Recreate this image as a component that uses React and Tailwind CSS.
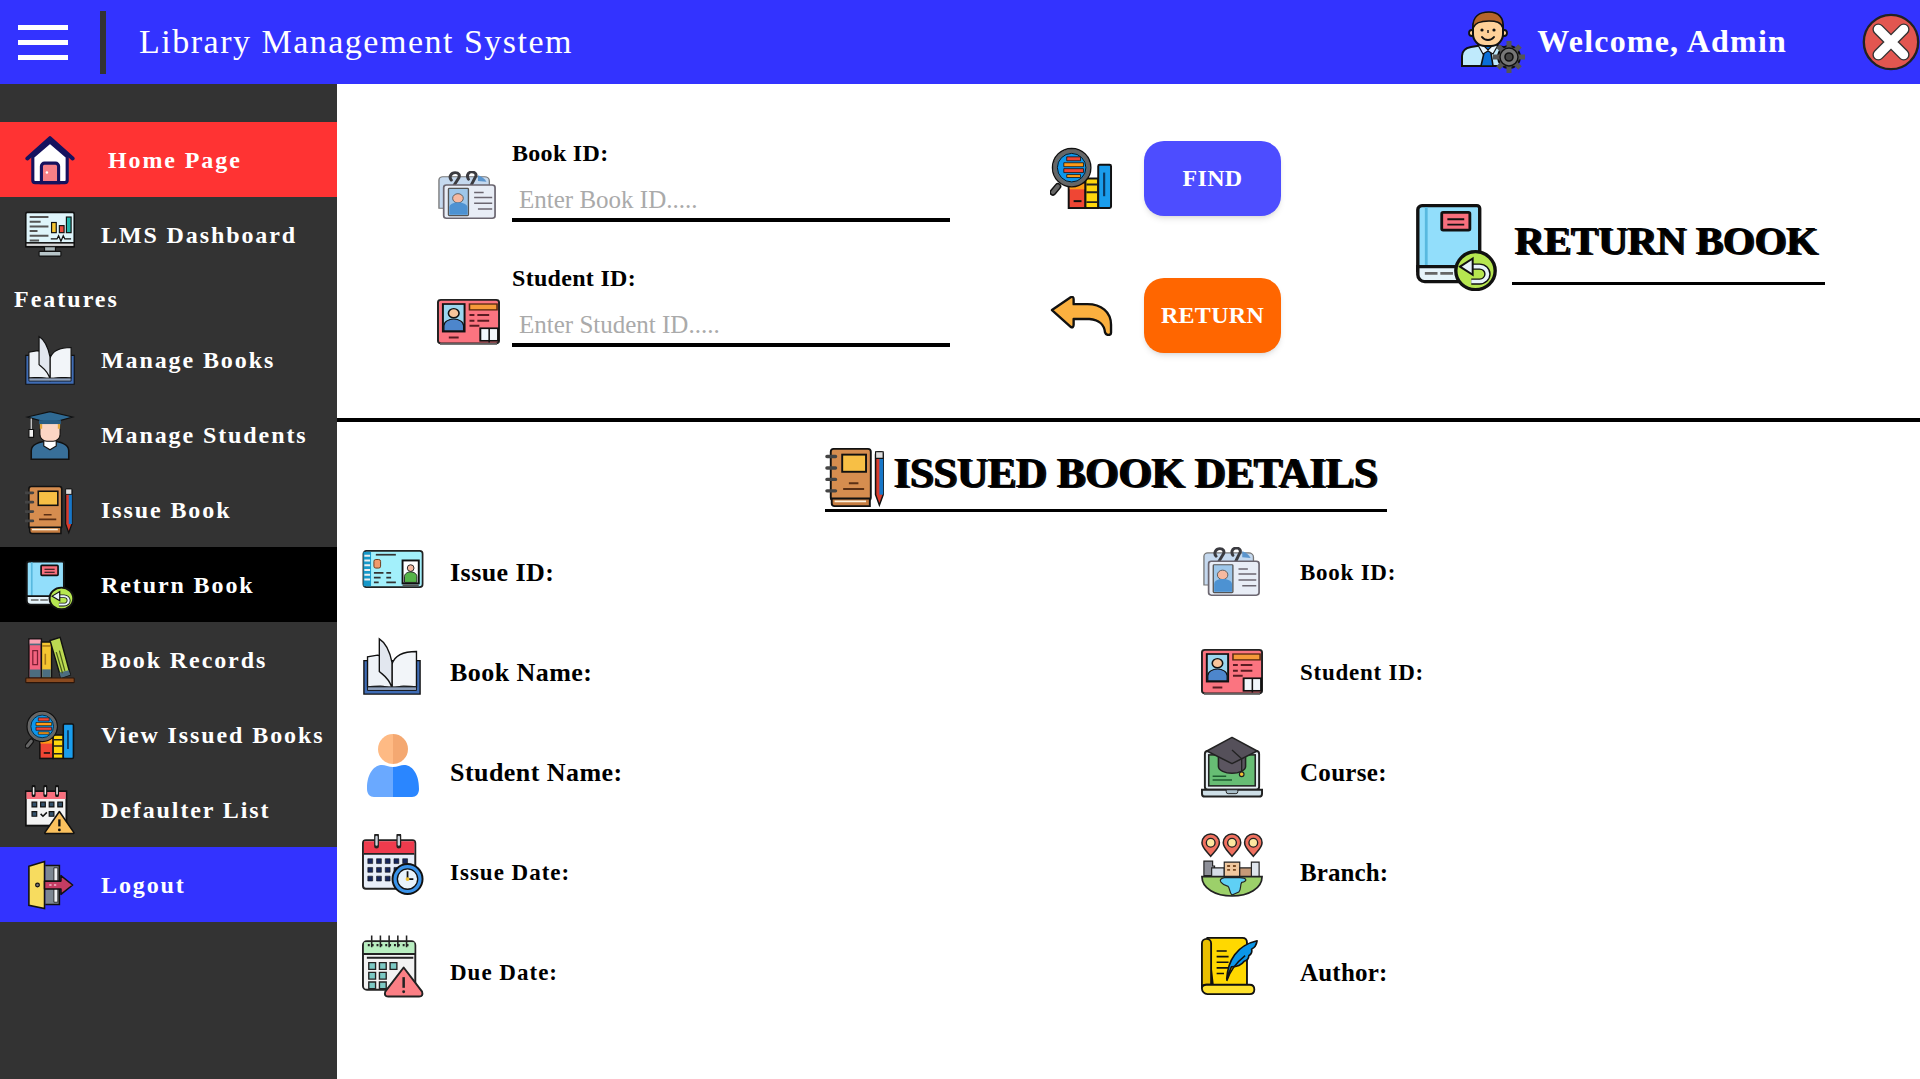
const INK = "#111";

const HomeIcon = ({ className }) => (
  <svg viewBox="0 0 64 64" className={className}>
    <path d="M10 28v30a3 3 0 0 0 3 3h38a3 3 0 0 0 3-3V28L32 9Z" fill="#fff" stroke="#16125e" strokeWidth="4" strokeLinejoin="round" />
    <path d="M3 30 32 4l29 26" fill="none" stroke="#16125e" strokeWidth="5" strokeLinecap="round" strokeLinejoin="round" />
    <path d="M21 61V40a4 4 0 0 1 4-4h14a4 4 0 0 1 4 4v21Z" fill="#f77f86" stroke="#16125e" strokeWidth="4" />
    <circle cx="28" cy="48" r="1.6" fill="#fff" />
  </svg>
);

const DashboardIcon = ({ className }) => (
  <svg viewBox="0 0 64 64" className={className}>
    <rect x="1" y="3" width="62" height="44" rx="2" fill="#dff5fb" stroke={INK} strokeWidth="2" />
    <rect x="1" y="42" width="62" height="5" fill="#d6d6d6" stroke={INK} strokeWidth="2" />
    <path d="M6 9h24M6 15h14M6 21h24M6 27h10M6 33h24M6 39h12" stroke="#555" strokeWidth="2.6" />
    <rect x="34" y="16" width="6" height="13" fill="#f5c531" stroke={INK} strokeWidth="1.5" />
    <rect x="44" y="20" width="6" height="9" fill="#ee4b3c" stroke={INK} strokeWidth="1.5" />
    <rect x="53" y="9" width="6" height="20" fill="#24b5aa" stroke={INK} strokeWidth="1.5" />
    <path d="M33 37h8l2-4 3 7 3-7 2 4h8" fill="none" stroke={INK} strokeWidth="1.6" />
    <path d="M25 47h14v6H25Z" fill="#a8b5b8" stroke={INK} strokeWidth="1.5" />
    <rect x="18" y="53" width="28" height="6" rx="1" fill="#b7c5c9" stroke={INK} strokeWidth="1.5" />
  </svg>
);

const OpenBookIcon = ({ className }) => (
  <svg viewBox="0 0 64 64" className={className}>
    <path d="M1 26h62v37H1Z" fill="#3f6cb5" stroke={INK} strokeWidth="1.5" />
    <path d="M32 58C24 52 14 55 5 55V22l11-2c8 1 14 8 16 14Z" fill="#eef2f7" stroke={INK} strokeWidth="1.5" />
    <path d="M32 58c8-6 18-3 27-3V16c-13 0-24 4-27 14Z" fill="#f2f5f9" stroke={INK} strokeWidth="1.5" />
    <path d="M32 56C28 44 22 42 18 38V2c8 5 12 16 14 26Z" fill="#e2e7ef" stroke={INK} strokeWidth="1.5" />
    <path d="M5 55h54v4H5Z" fill="#8ea0bc" stroke={INK} strokeWidth="1" />
  </svg>
);

const GraduateIcon = ({ className }) => (
  <svg viewBox="0 0 64 64" className={className}>
    <path d="M8 63V52c0-8 10-12 24-12s24 4 24 12v11Z" fill="#386f99" stroke={INK} strokeWidth="2" />
    <path d="M24 38h16v8l-8 5-8-5Z" fill="#fff" stroke={INK} strokeWidth="1.5" />
    <rect x="19" y="14" width="26" height="26" rx="9" fill="#fcd5c4" stroke={INK} strokeWidth="1.5" />
    <path d="M19 24V14h3v10Zm23 0V14h3v10Z" fill="#e4a73a" />
    <path d="M3 9 32 2l29 7-29 8Z" fill="#2f6a94" stroke={INK} strokeWidth="1.5" />
    <path d="M18 13h28v5H18Z" fill="#2a5d83" />
    <path d="M8 11v14" stroke="#ddd" strokeWidth="1.5" />
    <path d="M5 25h6v10H5Z" fill="#f1f1f1" stroke={INK} strokeWidth="1.5" />
  </svg>
);

const NotebookIcon = ({ className }) => (
  <svg viewBox="0 0 64 64" className={className}>
    <rect x="5" y="2" width="42" height="54" rx="3" fill="#d68d4f" stroke={INK} strokeWidth="2" />
    <path d="M6 54h40v8H9a3 3 0 0 1-3-3Z" fill="#c57c40" stroke={INK} strokeWidth="2" />
    <path d="M9 56h33v2H9Z" fill="#fbf0dc" />
    <rect x="17" y="8" width="25" height="18" fill="#f7bf45" stroke={INK} strokeWidth="2" />
    <path d="M24 38h10M18 44h22" stroke="#5a2f14" strokeWidth="2" />
    <path d="M1 10h9M1 22h9M1 34h9M1 46h9" stroke="#444" strokeWidth="3.6" strokeLinecap="round" />
    <path d="M52 8a3 3 0 0 1 3-3h2a3 3 0 0 1 3 3v42l-4 11-4-11Z" fill="#d83b2d" stroke={INK} strokeWidth="1.6" />
    <path d="M56 11h4v39h-4Z" fill="#1677c9" />
    <path d="M52 5h8v7h-8Z" fill="#ddd" stroke={INK} strokeWidth="1.2" />
  </svg>
);

const ReturnBookIcon = ({ className }) => (
  <svg viewBox="4 0 59 65" preserveAspectRatio="none" className={className}>
    <path d="M6 50V5a3 3 0 0 1 3-3h39a2 2 0 0 1 2 2v46Z" fill="#92defb" stroke={INK} strokeWidth="2.4" />
    <path d="M12 3v47" stroke="#58b9df" strokeWidth="2" />
    <rect x="23" y="7" width="20" height="13" rx="1" fill="#f86f7d" stroke={INK} strokeWidth="2" />
    <path d="M27 12h12M27 16h12" stroke={INK} strokeWidth="1.3" />
    <path d="M6 47v6a5 5 0 0 0 5 5h33V47Z" fill="#e6f4fb" stroke={INK} strokeWidth="2.4" />
    <path d="M11 52h24" stroke="#666" strokeWidth="2" strokeDasharray="9 2" />
    <circle cx="47" cy="50" r="14" fill="#b6e650" stroke={INK} strokeWidth="2.4" />
    <path d="M44 47h6a5.5 5.5 0 0 1 0 11h-6" fill="none" stroke={INK} strokeWidth="4.6" />
    <path d="M44 47h6a5.5 5.5 0 0 1 0 11h-6" fill="none" stroke="#e8f4fa" strokeWidth="2.6" />
    <path d="m36 47 9-6v12Z" fill="#e8f4fa" stroke={INK} strokeWidth="1.4" />
  </svg>
);

const ShelfIcon = ({ className }) => (
  <svg viewBox="0 0 64 64" className={className}>
    <rect x="5" y="5" width="16" height="50" fill="#f2637f" stroke={INK} strokeWidth="1.8" />
    <path d="M6 6h14v7H6Zm0 38h14v10H6Z" fill="#4c6d80" />
    <path d="M6 6h14v5H6Z" fill="#f9a3b2" />
    <path d="M10 20h6v18h-6Z" fill="none" stroke="#7b1f33" strokeWidth="1.6" />
    <rect x="21" y="9" width="13" height="46" fill="#f5c531" stroke={INK} strokeWidth="1.8" />
    <path d="M22 44h11v10H22Z" fill="#4c6d80" />
    <path d="M22 14h11" stroke="#a9791a" strokeWidth="2" />
    <path d="M26 24v14" stroke="#a9791a" strokeWidth="2" />
    <path d="m32 7 13-4 13 48-12 4Z" fill="#bcd951" stroke={INK} strokeWidth="1.8" />
    <path d="m44 48 12-3 2 6-12 4Z" fill="#4c6d80" />
    <path d="m40 22 8 27M44 20l7 26" stroke="#4b5e18" strokeWidth="1.6" />
    <rect x="1" y="55" width="62" height="6" rx="1" fill="#8a4a1f" stroke="#2c160a" strokeWidth="1.4" />
  </svg>
);

const SearchBooksIcon = ({ className }) => (
  <svg viewBox="0 0 64 64" className={className}>
    <rect x="19" y="36" width="17" height="26" fill="#ef4634" stroke={INK} strokeWidth="2" />
    <path d="M20 37h15v6H20Z" fill="#ff9b16" />
    <path d="M24 55h8" stroke={INK} strokeWidth="2" />
    <rect x="36" y="32" width="13" height="30" fill="#fdd60c" stroke={INK} strokeWidth="2" />
    <path d="M37 38h11M37 46h11M37 56h11" stroke="#222" strokeWidth="2" />
    <rect x="49" y="18" width="13" height="44" rx="1.5" fill="#1a9dec" stroke={INK} strokeWidth="2" />
    <path d="M55 26v24" stroke="#0b3a63" strokeWidth="2.2" />
    <path d="m8 40-5 6" stroke={INK} strokeWidth="7" strokeLinecap="round" />
    <path d="m8 40-5 6" stroke="#666" strokeWidth="4" strokeLinecap="round" />
    <circle cx="22" cy="21" r="17" fill="#0d96ec" stroke="#666" strokeWidth="4" />
    <circle cx="22" cy="21" r="19.500" fill="none" stroke={INK} strokeWidth="1.400" />
    <circle cx="22" cy="21" r="14.500" fill="none" stroke={INK} strokeWidth="1" />
    <path d="M17 10h14v4H17Z" fill="#ef4634" stroke={INK} strokeWidth=".8" />
    <path d="M14 16h20v4H14Z" fill="#ff9b16" stroke={INK} strokeWidth=".8" />
    <path d="M14 22h20v4H14Z" fill="#ef4634" stroke={INK} strokeWidth=".8" />
    <path d="M17 28h14v3H17Z" fill="#ff9b16" stroke={INK} strokeWidth=".8" />
  </svg>
);

const CalendarWarnIcon = ({ className }) => (
  <svg viewBox="0 0 64 64" className={className}>
    <rect x="1" y="8" width="52" height="44" fill="#f3f3f3" stroke="#111" strokeWidth="2.400" />
    <path d="M2 9h50v9H2Z" fill="#f86f7d" />
    <path d="M11 2v11M26 2v11M41 2v11" stroke="#111" strokeWidth="5" strokeLinecap="round" />
    <path d="M11 3.500v8M26 3.500v8M41 3.500v8" stroke="#eee" strokeWidth="2" strokeLinecap="round" />
    <path d="M9 22h6v6H9Zm11 0h6v6h-6Zm11 0h6v6h-6Zm11 0h6v6h-6ZM9 34h6v6H9Zm22 0h6v6h-6Z" fill="#33506a" stroke="#111" strokeWidth="1.500" />
    <path d="m20 37 3 3 5-5" fill="none" stroke="#111" strokeWidth="2" />
    <path d="M44 34 62 60a1 1 0 0 1-1 2H27a1 1 0 0 1-1-2Z" fill="#fbc15e" stroke="#111" strokeWidth="2" strokeLinejoin="round" />
    <path d="M44 44v9" stroke="#111" strokeWidth="3" />
    <circle cx="44" cy="57.500" r="1.800" fill="#111" />
  </svg>
);

const LogoutIcon = ({ className }) => (
  <svg viewBox="0 0 64 64" className={className}>
    <path d="M26 7h18v50H26" fill="#7c8792" stroke="#111" strokeWidth="2" />
    <path d="M37 10h5v44h-5Z" fill="#eef1f4" stroke="#111" strokeWidth="1" />
    <path d="M5 8 25 2v60L5 58Z" fill="#f7dc5f" stroke="#111" strokeWidth="2" />
    <circle cx="16" cy="32" r="2.400" fill="#777" stroke="#111" strokeWidth="1.500" />
    <path d="M25 27h21v-7l15 12-15 12v-7H25Z" fill="#c43c63" stroke="#111" strokeWidth="2" strokeLinejoin="round" />
    <path d="M31 32h3M37 32h3" stroke="#fff" strokeWidth="1.500" />
  </svg>
);

const AdminIcon = ({ className }) => (
  <svg viewBox="0 0 64 64" className={className}>
    <path d="M1 56V46c0-5 4-8 9-9l12-2h8l12 2c3 1 5 2 6 4v15Z" fill="#bfeafc" stroke={INK} strokeWidth="2" />
    <path d="M19 36h15l-4 7 2 13h-12l3-13Z" fill="#0a6fd8" stroke={INK} strokeWidth="1.600" />
    <path d="M17 35h5l5 5 5-5h5l-5 9-5-3-5 3Z" fill="#e9f7ff" stroke={INK} strokeWidth="1.200" />
    <circle cx="11" cy="23" r="3" fill="#ffd199" stroke={INK} strokeWidth="1.800" />
    <circle cx="43" cy="23" r="3" fill="#ffd199" stroke={INK} strokeWidth="1.800" />
    <rect x="12" y="6" width="30" height="30" rx="12" fill="#ffd199" stroke={INK} strokeWidth="2" />
    <path d="M12 18C11 6 19 2 28 2s15 5 14 16c-2-6-7-7-14-7S14 12 12 18Z" fill="#b5662c" stroke={INK} strokeWidth="1.600" />
    <circle cx="21" cy="20" r="1.600" fill={INK} />
    <circle cx="33" cy="20" r="1.600" fill={INK} />
    <path d="M21 27c3 4 9 4 12 0" fill="none" stroke={INK} strokeWidth="2" strokeLinecap="round" />
    <path d="M27 20v3" stroke={INK} strokeWidth="1.400" />
    <circle cx="48" cy="47" r="11" fill="#6b6b6b" stroke={INK} strokeWidth="2" />
    <path d="M48 31v32M32 47h32M37 36l22 22M59 36 37 58" stroke="#555" strokeWidth="5" />
    <circle cx="48" cy="47" r="9" fill="#777" stroke={INK} strokeWidth="1.400" />
    <circle cx="48" cy="47" r="4" fill="#444" stroke={INK} strokeWidth="1.600" />
  </svg>
);

const CloseIcon = ({ className }) => (
  <svg viewBox="0 0 64 64" className={className}>
    <circle cx="32" cy="32" r="30" fill="#e25650" stroke="#222" strokeWidth="2.600" />
    <path d="m18 18 28 28M46 18 18 46" stroke="#333" strokeWidth="13" strokeLinecap="round" />
    <path d="m18 18 28 28M46 18 18 46" stroke="#fff" strokeWidth="10" strokeLinecap="round" />
  </svg>
);

const IdCardsIcon = ({ className }) => (
  <svg viewBox="2 3 61 58" preserveAspectRatio="none" className={className}>
    <path d="M3 48V14a4 4 0 0 1 4-4h44a5 5 0 0 1 5 5v6H12v27Z" fill="#c5d9ef" stroke="#777" strokeWidth="1.400" />
    <path d="M44 8c4 1 7 4 9 8l-9-1Z" fill="#5b95cd" />
    <path d="M16 14c-3-4 0-9 4-9s5 3 4 6l-5 9M34 13c-2-4-1-8 3-9 5 0 6 4 4 7l-4 9" fill="none" stroke="#3b3b40" strokeWidth="3.200" strokeLinecap="round" />
    <rect x="8" y="20" width="54" height="40" rx="3" fill="#e8edf6" stroke="#6b6670" strokeWidth="1.800" />
    <rect x="13" y="24" width="21" height="33" rx="1" fill="#9ec7ea" stroke="#555" strokeWidth="1.400" />
    <circle cx="23" cy="36" r="5.600" fill="#f6b9a0" stroke="#555" strokeWidth="1" />
    <path d="M14 56v-9c0-4 4-6 9-6s10 2 10 6v9Z" fill="#4d92d2" />
    <path d="M40 29h10M40 35h19M40 42h19M44 49h15" stroke="#6b6670" strokeWidth="1.800" />
  </svg>
);

const StudentCardIcon = ({ className }) => (
  <svg viewBox="0 4 64 55" preserveAspectRatio="none" className={className}>
    <rect x="1" y="5" width="62" height="52" rx="3" fill="#fb7480" stroke="#222" strokeWidth="2" />
    <path d="M3 58h58" stroke="#777" strokeWidth="2" />
    <rect x="6" y="10" width="22" height="33" fill="#9bd6ef" stroke="#111" strokeWidth="2" />
    <circle cx="17" cy="21" r="5.400" fill="#f9c59a" stroke="#111" strokeWidth="1.600" />
    <path d="M7 42v-6c0-5 5-8 10-8s10 3 10 8v6Z" fill="#4d86cc" stroke="#111" strokeWidth="1.200" />
    <rect x="33" y="10" width="28" height="7" fill="#f69a3a" stroke="#5a2a10" strokeWidth="1.600" />
    <path d="M33 23h5M41 23h12M33 30h5M41 30h12M33 36h10M12 50h10" stroke="#5a1c22" strokeWidth="2.400" />
    <rect x="44" y="39" width="18" height="15" fill="#f2f7fb" stroke="#111" strokeWidth="2" />
    <path d="M53 39v17" stroke="#111" strokeWidth="1.600" />
  </svg>
);

const UndoIcon = ({ className }) => (
  <svg viewBox="0 0 64 40" className={className}>
    <path d="M2 14 21 1c2-1 3 0 3 2v5h14c14 0 24 8 24 21v8c0 3-5 3-6 0-1-8-5-13-16-14H24v6c0 2-1 3-3 2Z" fill="#fbb03f" stroke={INK} strokeWidth="2.400" strokeLinejoin="round" />
  </svg>
);

const IssueCardIcon = ({ className }) => (
  <svg viewBox="0 0 64 44" className={className}>
    <rect x="1" y="2" width="62" height="38" rx="3" fill="#a3f0fb" stroke="#222" strokeWidth="1.800" />
    <path d="M1 3h8v36H1Z" fill="#1798c9" />
    <path d="M2 7h6M2 12h6M2 17h6M2 22h6M2 27h6M2 32h6" stroke="#eee" strokeWidth="2" />
    <path d="M14 6h21" stroke="#333" strokeWidth="1.800" />
    <rect x="12" y="11" width="7" height="9" rx="2" fill="#f09a6c" stroke="#6a3a1c" strokeWidth="1" />
    <path d="M12 25h10M12 30h7M12 35h5M25 25h5M25 30h5M25 35h10" stroke="#333" strokeWidth="1.800" />
    <rect x="42" y="12" width="17" height="24" fill="#fff" stroke="#111" strokeWidth="2" />
    <circle cx="50.500" cy="20" r="3.500" fill="#f6b9a0" stroke="#222" strokeWidth="1" />
    <path d="M44 35v-6c0-3 3-5 6.500-5s6.500 2 6.500 5v6Z" fill="#56b548" stroke="#222" strokeWidth="1" />
    <path d="M42 38h17" stroke="#555" strokeWidth="2" />
  </svg>
);

const PersonIcon = ({ className }) => (
  <svg viewBox="0 0 52 64" className={className}>
    <path d="M26 1a15 15 0 0 0 0 30Z" fill="#feba84" />
    <path d="M26 1a15 15 0 0 1 0 30Z" fill="#f4a871" />
    <path d="M26 34c-4 0-8-2-11-2-7 0-15 7-15 24 0 5 3 8 7 8h19Z" fill="#6aa9ff" />
    <path d="M26 34c4 0 8-2 11-2 7 0 15 7 15 24 0 5-3 8-7 8H26Z" fill="#2a86ff" />
  </svg>
);

const CalendarClockIcon = ({ className }) => (
  <svg viewBox="0 0 64 64" className={className}>
    <rect x="1" y="6" width="54" height="50" rx="3" fill="#e8eef9" stroke="#222" strokeWidth="2" />
    <path d="M2 7h52v13H2Z" fill="#ef3b4d" />
    <path d="M2 20h52" stroke="#222" strokeWidth="2" />
    <path d="M15 1v11M38 1v11" stroke="#222" strokeWidth="5" strokeLinecap="round" />
    <path d="M15 2.500v8M38 2.500v8" stroke="#cfd6de" strokeWidth="2.400" strokeLinecap="round" />
    <path d="M6 25h5v5H6Zm9 0h5v5h-5Zm9 0h5v5h-5Zm9 0h5v5h-5Zm9 0h5v5h-5ZM6 34h5v5H6Zm9 0h5v5h-5Zm9 0h5v5h-5Zm9 0h5v5h-5ZM6 43h5v5H6Zm9 0h5v5h-5Zm9 0h5v5h-5Z" fill="#16265c" stroke="#111" strokeWidth=".6" />
    <circle cx="47" cy="46" r="15.500" fill="#3a93ea" stroke="#111" strokeWidth="2" />
    <circle cx="47" cy="46" r="10.500" fill="#e8f3fb" stroke="#111" strokeWidth="1.400" />
    <path d="M47 38v8h6" fill="none" stroke="#111" strokeWidth="1.800" />
    <circle cx="47" cy="46" r="2" fill="#f1c232" />
  </svg>
);

const CalendarDueIcon = ({ className }) => (
  <svg viewBox="0 0 64 64" className={className}>
    <rect x="1" y="6" width="54" height="50" rx="4" fill="#f3f3f3" stroke="#222" strokeWidth="2" />
    <path d="M2 7h52v11H2Z" fill="#b8eec0" />
    <path d="M1 19h54M5 23h48" stroke="#222" strokeWidth="2" />
    <path d="M10 0v12M19 0v12M28 0v12M37 0v12M46 0v12" stroke="#222" strokeWidth="1.600" />
    <path d="M6 10h8M15 10h8M24 10h8M33 10h8M42 10h8" stroke="#222" strokeWidth="2.400" strokeDasharray="2 2" />
    <path d="M7 28h7v7H7Zm11 0h7v7h-7Zm11 0h7v7h-7ZM7 38h7v7H7Zm11 0h7v7h-7ZM7 48h7v7H7Zm11 0h7v7h-7Z" fill="#7cc9c4" stroke="#222" strokeWidth="1.400" />
    <path d="M43 33 62 58c1 3 0 5-3 5H27c-3 0-4-2-3-5Z" fill="#fb7f85" stroke="#222" strokeWidth="2" strokeLinejoin="round" />
    <path d="M43 43v11" stroke="#222" strokeWidth="2.600" />
    <circle cx="43" cy="58" r="1.500" fill="#222" />
  </svg>
);

const LaptopIcon = ({ className }) => (
  <svg viewBox="0 0 64 64" className={className}>
    <rect x="4" y="16" width="56" height="40" rx="3" fill="#e6eef3" stroke="#222" strokeWidth="2" />
    <rect x="8" y="20" width="48" height="32" fill="#67bd74" stroke="#222" strokeWidth="1.600" />
    <path d="M12 42h14M12 46h20" stroke="#1f5c30" strokeWidth="1.600" />
    <path d="M1 56h62v4a3 3 0 0 1-3 3H4a3 3 0 0 1-3-3Z" fill="#cfe0e8" stroke="#222" strokeWidth="2" />
    <path d="M26 56h12v2a2 2 0 0 1-2 2h-8a2 2 0 0 1-2-2Z" fill="#aac0cb" stroke="#222" strokeWidth="1" />
    <path d="M18 20v12c0 4 7 7 14 7s14-3 14-7V20Z" fill="#5b5560" stroke="#222" strokeWidth="1.600" />
    <path d="M32 2 58 16 32 29 6 16Z" fill="#55505a" stroke="#222" strokeWidth="1.600" strokeLinejoin="round" />
    <path d="M32 15 42 24v14" fill="none" stroke="#222" strokeWidth="1.400" />
    <circle cx="42" cy="40" r="2.400" fill="#f1c232" stroke="#222" strokeWidth="1.200" />
  </svg>
);

const Pin = ({ x }) => (
  <g>
    <path d={`M${x} 23c-5-6-9-9-9-14a9 9 0 0 1 18 0c0 5-4 8-9 14Z`} fill="#f0705f" stroke="#222" strokeWidth="1.600" />
    <circle cx={x} cy="9" r="4.500" fill="#fde7a0" stroke="#222" strokeWidth="1.400" />
  </g>
);

const BranchIcon = ({ className }) => (
  <svg viewBox="0 0 64 64" className={className}>
    <Pin x={10} />
    <Pin x={32} />
    <Pin x={54} />
    <path d="M3 43V28h9v5h2v10Z" fill="#8d8f98" stroke="#222" strokeWidth="1.200" />
    <path d="M11 44V35h13v9Z" fill="#d6dde6" stroke="#222" strokeWidth="1.200" />
    <path d="M24 44V29h16v15Z" fill="#f0c89f" stroke="#222" strokeWidth="1.200" />
    <path d="M27 33h3M33 33h3M27 37h3M33 37h3" stroke="#7a4a22" strokeWidth="2" />
    <path d="M40 44v-9h13v9Z" fill="#c69a78" stroke="#222" strokeWidth="1.200" />
    <path d="M52 44V29h8v15Z" fill="#dfe5ec" stroke="#222" strokeWidth="1.200" />
    <path d="M1 44h62c0 12-14 20-31 20S1 56 1 44Z" fill="#9cd06a" stroke="#222" strokeWidth="1.800" />
    <path d="M24 45h16c8 0 8 4 2 5-2 3 0 6-3 10l-7 3c-3-3-2-7-4-9-5-1-13-7-4-9Z" fill="#5fd0f5" stroke="#222" strokeWidth="1.200" />
  </svg>
);

const ScrollIcon = ({ className }) => (
  <svg viewBox="1 1 62 62" preserveAspectRatio="none" className={className}>
    <path d="M8 2h38c3 0 5 2 5 5v46H14Z" fill="#ffd800" stroke="#111" strokeWidth="2" />
    <path d="M2 8a5 5 0 0 1 10 0v44H7c-3 0-5 1-5 4Z" fill="#e9bf00" stroke="#111" strokeWidth="2" />
    <path d="M10 52h44c4 0 5 3 5 5s-1 5-5 5H8a6 6 0 0 1-6-6c0-3 2-4 5-4h3Z" fill="#ffe22e" stroke="#111" strokeWidth="2" />
    <path d="M18 16h11M18 22h13M18 28h13M18 34h13M18 40h8" stroke="#111" strokeWidth="1.800" />
    <path d="M29 46C30 26 40 10 62 5c-1 6-3 7-6 9 1 3 0 5-3 7 0 3-2 5-5 6-3 4-9 6-14 6Z" fill="#0b96e8" stroke="#111" strokeWidth="1.800" strokeLinejoin="round" />
    <path d="M29 48c4-12 11-20 20-27" fill="none" stroke="#111" strokeWidth="1.600" />
  </svg>
);

const menuItems = [
  { label: "Home Page", Icon: HomeIcon, rowClass: "bg-[#ff3333]", textClass: "ml-[33px]" },
  { label: "LMS Dashboard", Icon: DashboardIcon },
  { heading: "Features" },
  { label: "Manage Books", Icon: OpenBookIcon },
  { label: "Manage Students", Icon: GraduateIcon },
  { label: "Issue Book", Icon: NotebookIcon },
  { label: "Return Book", Icon: ReturnBookIcon, rowClass: "bg-black" },
  { label: "Book Records", Icon: ShelfIcon },
  { label: "View Issued Books", Icon: SearchBooksIcon },
  { label: "Defaulter List", Icon: CalendarWarnIcon },
  { label: "Logout", Icon: LogoutIcon, rowClass: "bg-[#3333ff]" },
];

const bigText = "mb-[2px] ml-[26px] text-[26px] tracking-[0.45px]";
const smallText = "ml-[26px] text-[23px] tracking-[1px]";

const leftDetails = [
  { label: "Issue ID:", Icon: IssueCardIcon, iconClass: "w-[62px] h-[42px] mb-[6px]", textClass: bigText },
  { label: "Book Name:", Icon: OpenBookIcon, iconClass: "-ml-[1px] w-[62px] h-[58px] mb-[14px] mr-[1px]", textClass: bigText },
  { label: "Student Name:", Icon: PersonIcon, iconClass: "w-[62px] h-[64px] mb-[16px]", textClass: bigText },
  { label: "Issue Date:", Icon: CalendarClockIcon, iconClass: "w-[62px] h-[63px] mb-[16px]", textClass: smallText },
  { label: "Due Date:", Icon: CalendarDueIcon, iconClass: "w-[62px] h-[63px] mb-[14px]", textClass: smallText },
];

const rightDetails = [
  { label: "Book ID:", Icon: IdCardsIcon, iconClass: "ml-[2px] mr-[3px] w-[57px] h-[49px] mb-[4px]", textClass: "ml-[37px] text-[23px] tracking-[0.75px]" },
  { label: "Student ID:", Icon: StudentCardIcon, iconClass: "w-[62px] h-[46px] mb-[2px]", textClass: "ml-[37px] text-[23px] tracking-[0.75px]" },
  { label: "Course:", Icon: LaptopIcon, iconClass: "w-[62px] h-[63px] mb-[14px]", textClass: "ml-[37px] text-[25px] tracking-[0.3px]" },
  { label: "Branch:", Icon: BranchIcon, iconClass: "w-[62px] h-[64px] mb-[16px]", textClass: "ml-[37px] text-[25px] tracking-[0.1px]" },
  { label: "Author:", Icon: ScrollIcon, iconClass: "w-[57px] mr-[5px] h-[58px] mb-[14px]", textClass: "ml-[37px] text-[25px] tracking-[0.2px]" },
];

const Sidebar = () => (
  <aside className="w-[337px] shrink-0 bg-[#333333] pt-[38px] text-white">
    {menuItems.map((item) =>
      item.heading ? (
        <p key={item.heading} className="h-[50px] pl-[14px] pt-[13px] text-[24px] font-bold leading-[28px] tracking-[2px]">
          {item.heading}
        </p>
      ) : (
        <div key={item.label} className={`flex h-[75px] items-center pl-[25px] ${item.rowClass || ""}`}>
          <item.Icon className="h-[50px] w-[50px]" />
          <span className={`pt-[1px] text-[24px] font-bold tracking-[1.9px] ${item.textClass || "ml-[26px]"}`}>
            {item.label}
          </span>
        </div>
      )
    )}
  </aside>
);

const Field = ({ label, placeholder, Icon, iconClass }) => (
  <div className="flex items-end">
    <Icon className={iconClass} />
    <div className="w-[438px]">
      <p className="text-[24px] font-bold leading-[24px] tracking-[0.3px] text-black">{label}</p>
      <input
        placeholder={placeholder}
        className="mt-[13px] h-[44px] w-full border-b-4 border-black pl-[7px] pt-[4px] text-[25px] outline-none placeholder:text-[#aaaaaa]"
      />
    </div>
  </div>
);

const DetailRow = ({ label, Icon, iconClass, textClass }) => (
  <div className="flex h-[100px] items-center">
    <Icon className={iconClass} />
    <span className={`font-bold text-black ${textClass}`}>{label}</span>
  </div>
);

export default function App() {
  return (
    <div className="flex h-[1079px] flex-col overflow-hidden bg-white font-['Liberation_Serif',serif]">
      <header className="flex h-[84px] shrink-0 items-center bg-[#3333ff] pl-[18px] text-white">
        <div className="flex w-[50px] flex-col gap-[10px]">
          <span className="h-[5px] bg-white" />
          <span className="h-[5px] bg-white" />
          <span className="h-[5px] bg-white" />
        </div>
        <div className="ml-[32px] h-[63px] w-[6px] bg-[#333333]" />
        <h1 className="mb-[2px] ml-[33px] text-[34px] font-normal tracking-[1.5px]">Library Management System</h1>
        <AdminIcon className="ml-auto h-[64px] w-[64px]" />
        <span className="mb-[2px] ml-[12px] text-[32px] font-bold tracking-[1.2px]">Welcome, Admin</span>
        <CloseIcon className="ml-[75px] h-[58px] w-[58px] shrink-0" />
      </header>

      <div className="flex flex-1">
        <Sidebar />
        <main className="flex-1">
          <section className="flex h-[338px] border-b-4 border-black pl-[100px] pt-[57px]">
            <div className="flex w-[513px] flex-col gap-[44px]">
              <Field label="Book ID:" placeholder="Enter Book ID....." Icon={IdCardsIcon} iconClass="mb-[3px] ml-[1px] mr-[16px] h-[48px] w-[58px]" />
              <Field label="Student ID:" placeholder="Enter Student ID....." Icon={StudentCardIcon} iconClass="mb-[2px] mr-[12px] h-[46px] w-[63px]" />
            </div>

            <div className="ml-[100px] flex w-[231px] flex-col gap-[62px]">
              <div className="flex items-center gap-[31px]">
                <SearchBooksIcon className="h-[63px] w-[63px]" />
                <button className="h-[75px] w-[137px] rounded-[20px] bg-[#4d4dff] pb-[2px] text-[24px] font-bold tracking-[0.3px] text-white shadow-md">
                  FIND
                </button>
              </div>
              <div className="flex items-center gap-[31px]">
                <UndoIcon className="h-[40px] w-[63px]" />
                <button className="h-[75px] w-[137px] rounded-[20px] bg-[#ff6600] pb-[2px] text-[24px] font-bold tracking-[0.3px] text-white shadow-md">
                  RETURN
                </button>
              </div>
            </div>

            <div className="ml-[134px] mt-[62px] flex h-[88px] items-start gap-[14px]">
              <ReturnBookIcon className="h-[88px] w-[83px]" />
              <div className="w-[313px] border-b-[3px] border-black pl-[2px] pt-[12px]">
                <h2 className="h-[67px] whitespace-nowrap text-[41px] font-bold leading-[50px] tracking-[-0.3px] text-black [text-shadow:2px_1px_0_#111]">
                  RETURN BOOK
                </h2>
              </div>
            </div>
          </section>

          <section className="pt-[25px]">
            <div className="ml-[488px] flex h-[65px] w-[562px] items-start border-b-[3px] border-black">
              <NotebookIcon className="h-[61px] w-[63px]" />
              <h2 className="ml-[5px] whitespace-nowrap pt-[1px] text-[43px] font-bold leading-[50px] tracking-[-0.4px] text-black [text-shadow:2px_1px_0_#111]">
                ISSUED BOOK DETAILS
              </h2>
            </div>

            <div className="mt-[11px] grid grid-cols-[839px_1fr] pl-[25px]">
              <div>
                {leftDetails.map((row) => (
                  <DetailRow key={row.label} {...row} />
                ))}
              </div>
              <div>
                {rightDetails.map((row) => (
                  <DetailRow key={row.label} {...row} />
                ))}
              </div>
            </div>
          </section>
        </main>
      </div>
    </div>
  );
}
